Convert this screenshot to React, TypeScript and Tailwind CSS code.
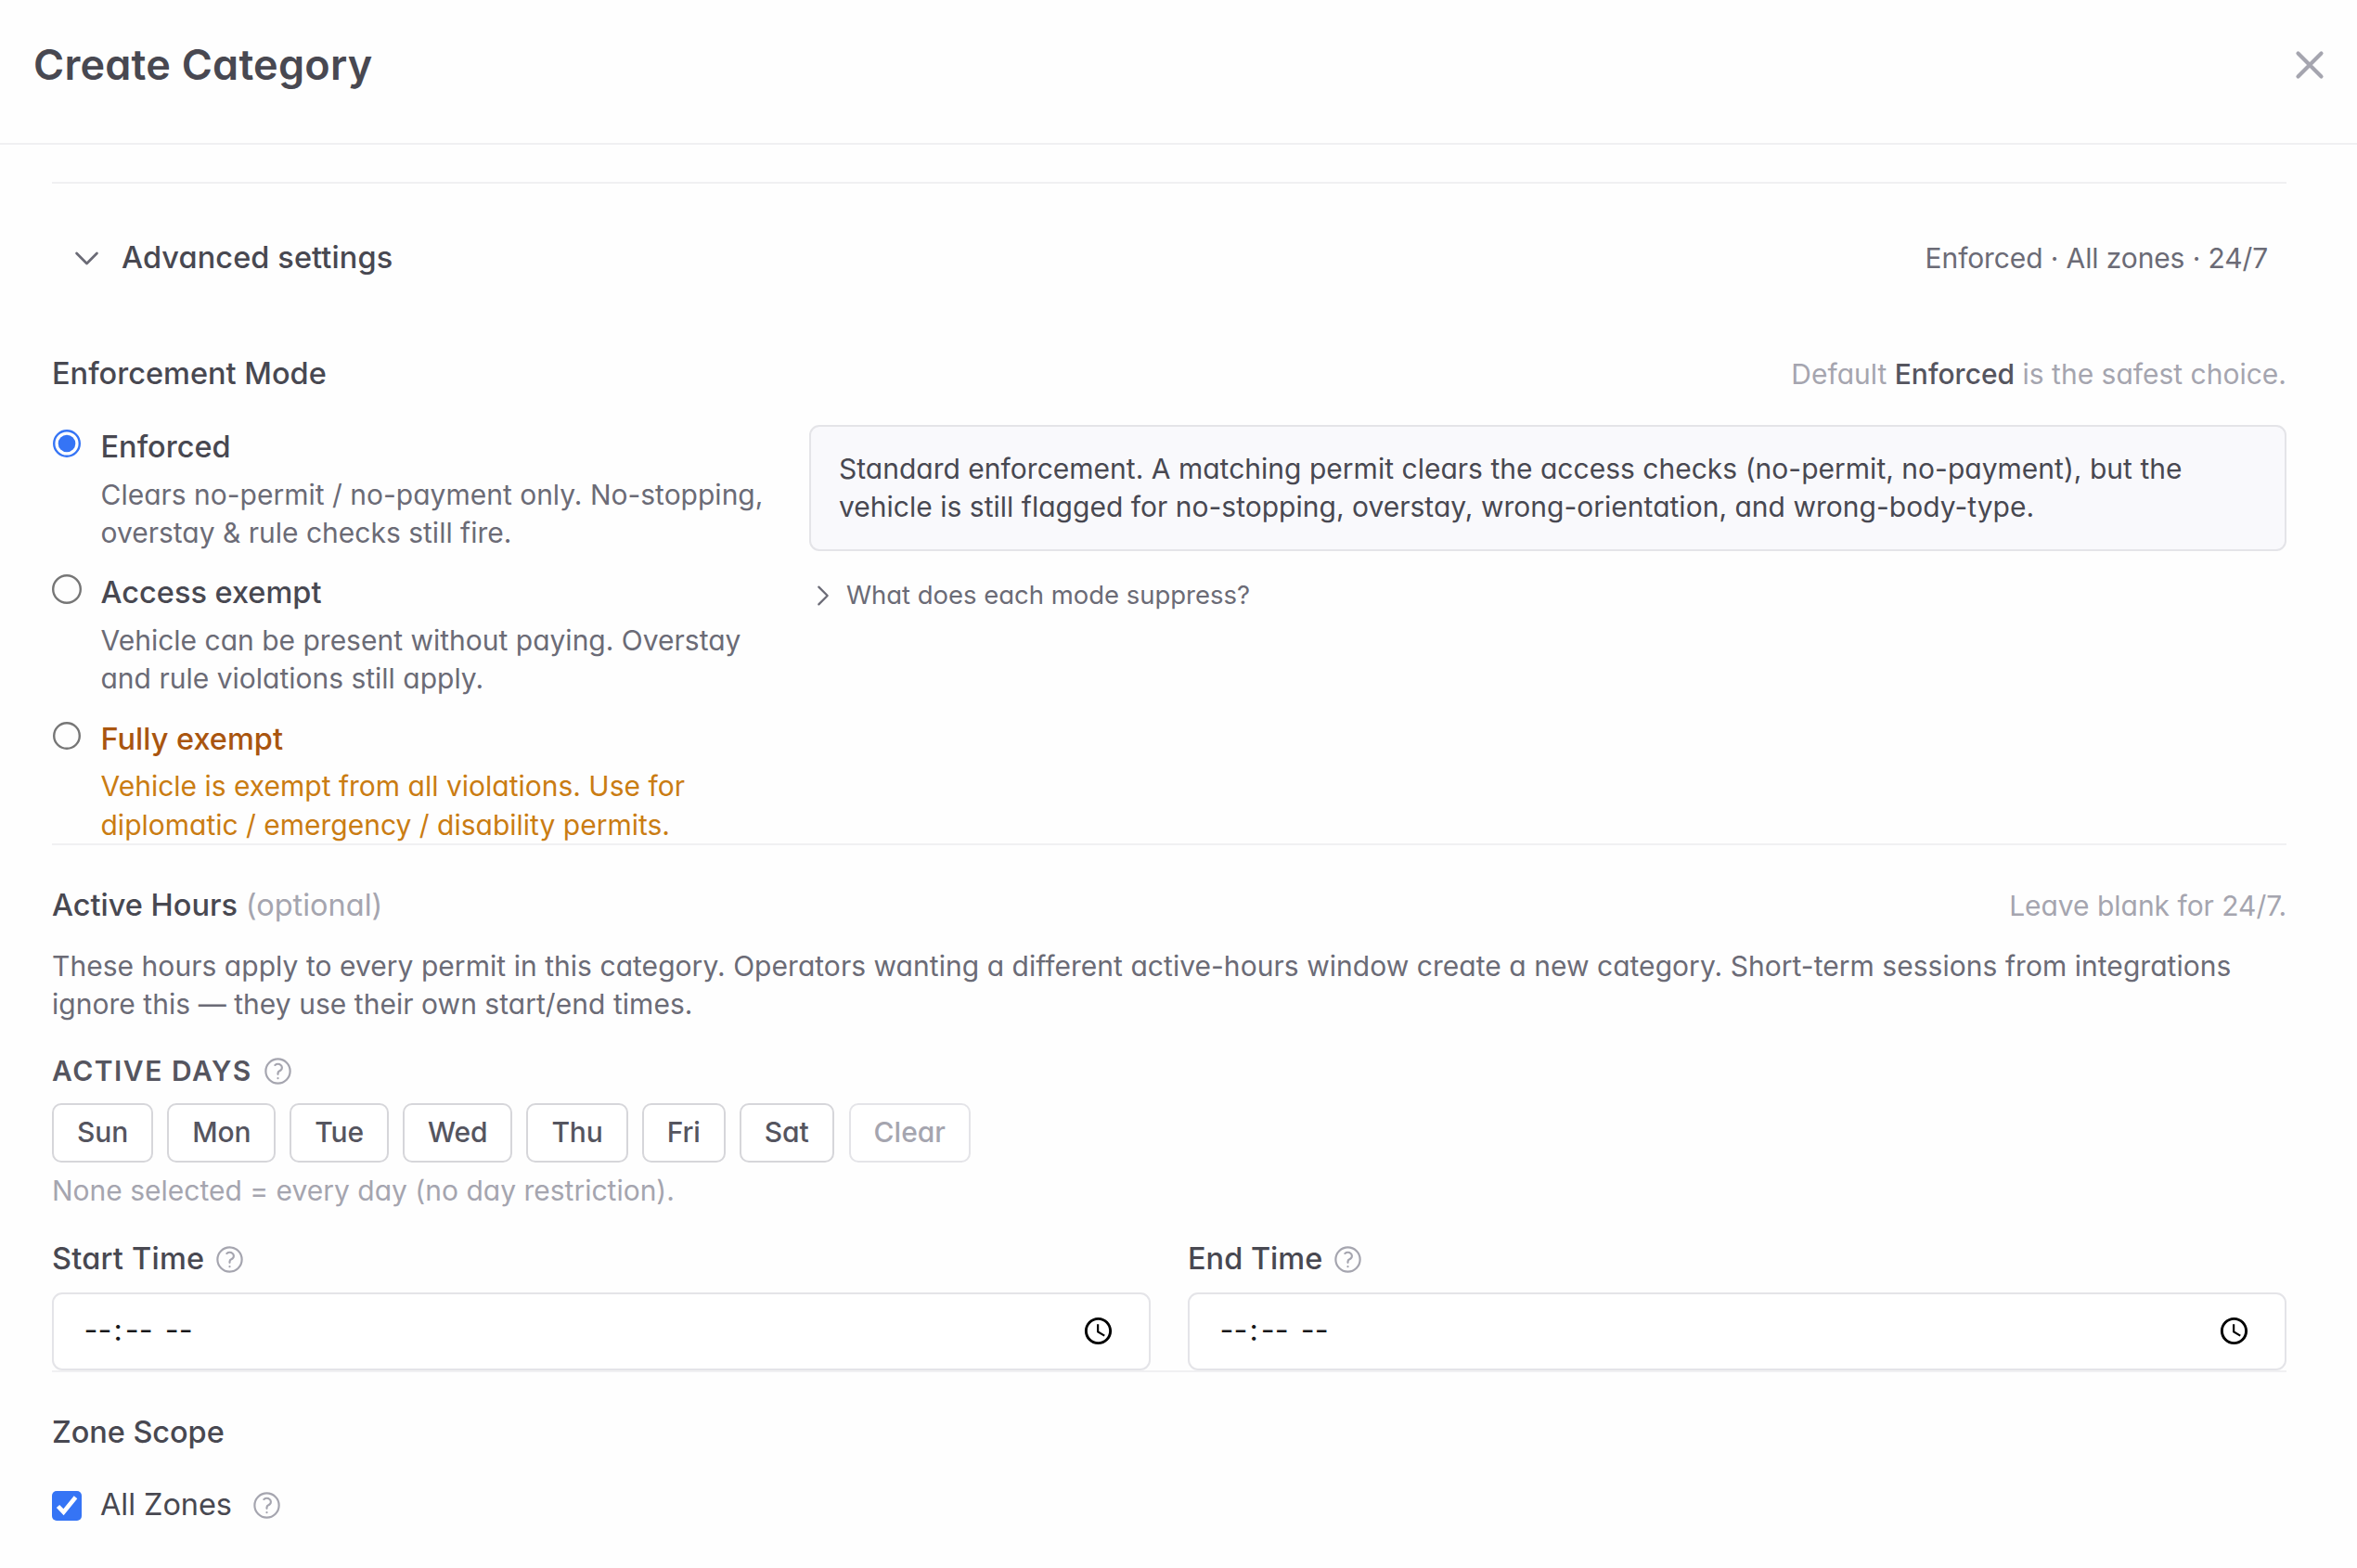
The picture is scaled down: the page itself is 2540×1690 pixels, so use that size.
import { HiOutlineChevronDown, HiOutlineChevronRight, HiOutlineQuestionMarkCircle, HiOutlineXMark } from "react-icons/hi2";
import { MdAccessTime } from "react-icons/md";

const modes = [
  {
    title: "Enforced",
    lines: ["Clears no-permit / no-payment only. No-stopping,", "overstay & rule checks still fire."],
    checked: true,
    warning: false,
    radius: 13.8,
  },
  {
    title: "Access exempt",
    lines: ["Vehicle can be present without paying. Overstay", "and rule violations still apply."],
    checked: false,
    warning: false,
    radius: 14.8,
  },
  {
    title: "Fully exempt",
    lines: ["Vehicle is exempt from all violations. Use for", "diplomatic / emergency / disability permits."],
    checked: false,
    warning: true,
    radius: 13.8,
  },
];

const days = ["Sun", "Mon", "Tue", "Wed", "Thu", "Fri", "Sat"];

function Help() {
  return <HiOutlineQuestionMarkCircle className="size-[35px] shrink-0 text-[#a5a5af]" />;
}

function Radio({ checked, radius }: { checked: boolean; radius: number }) {
  return (
    <svg viewBox="0 0 32 32" className="mt-1 size-8 shrink-0" fill="none">
      <circle cx="16" cy="16" r={radius} stroke={checked ? "#3574f5" : "#767676"} strokeWidth="2.4" />
      {checked && <circle cx="16" cy="16" r="9.3" fill="#3574f5" />}
    </svg>
  );
}

function TimeField({ label, className }: { label: string; className?: string }) {
  return (
    <div>
      <div className="flex h-[49px] items-center gap-2.5">
        <label className={`text-[32.5px] font-medium ${className ?? ""}`}>{label}</label>
        <Help />
      </div>
      <div className="mt-[11px] flex h-[84px] items-center justify-between rounded-[11px] border-2 border-[#e4e4e8] bg-white pr-[37px] pl-[32.5px] text-[32.5px] text-[#18181b]">
        <div className="flex">
          <span>--</span>
          <span className="mx-[2px]">:</span>
          <span className="mx-px">--</span>
          <span className="ml-3">--</span>
        </div>
        <MdAccessTime className="size-[35px] text-black" />
      </div>
    </div>
  );
}

export default function App() {
  return (
    <div className="h-[1690px] w-[2540px] overflow-hidden bg-[#fefefe] font-['Inter',sans-serif] text-[#484851] [font-feature-settings:'cv11']">
      <header className="flex h-[156px] items-start justify-between border-b-2 border-[#f0f0f2] pt-[42px] pr-[26px] pl-9">
        <h1 className="text-[45px] leading-[56px] font-semibold tracking-[0.005em]">Create Category</h1>
        <button className="mt-[3px]">
          <HiOutlineXMark className="size-[50px] text-[#a5a5af]" strokeWidth={2} />
        </button>
      </header>

      <main className="mt-10 ml-14 w-[2408px] border-t-2 border-[#f0f0f2]">
        <div className="mt-[50px] flex h-[60px] items-center justify-between px-5">
          <div className="flex items-center gap-5">
            <HiOutlineChevronDown className="size-[35px] text-[#6b6b76]" strokeWidth={1.9} />
            <span className="text-[32.5px] font-medium tracking-[0.003em]">Advanced settings</span>
          </div>
          <span className="text-[30px] tracking-[-0.004em] text-[#6b6b76]">Enforced · All zones · 24/7</span>
        </div>

        <section>
          <div className="mt-[70px] flex h-[49px] items-baseline justify-between">
            <h2 className="text-[32.5px] leading-[49px] font-medium">Enforcement Mode</h2>
            <p className="text-[30px] text-[#a5a5af]">
              Default <strong className="font-medium text-[#55555f]">Enforced</strong> is the safest choice.
            </p>
          </div>

          <div className="mt-[31px] -mb-px grid grid-cols-[776px_1592px] gap-10">
            <div className="flex flex-col gap-5">
              {modes.map((mode) => (
                <label key={mode.title} className="flex gap-[20.5px]">
                  <Radio checked={mode.checked} radius={mode.radius} />
                  <span>
                    <span className={`block text-[32.5px] leading-[48.75px] font-medium ${mode.warning ? "text-[#a9550f]" : ""}`}>
                      {mode.title}
                    </span>
                    <span className={`mt-1.5 block text-[30px] leading-[41.25px] whitespace-nowrap ${mode.warning ? "text-[#ca7c12]" : "text-[#6b6b76]"}`}>
                      {mode.lines[0]}
                      <br />
                      {mode.lines[1]}
                    </span>
                  </span>
                </label>
              ))}
            </div>

            <div>
              <div className="h-[136px] rounded-[11px] border-2 border-[#e4e4e8] bg-[#f9f9fc] px-[30px] py-[25px] text-[30px] leading-[41.25px] tracking-[0.0005em]">
                Standard enforcement. A matching permit clears the access checks (no-permit, no-payment), but the
                <br />
                vehicle is still flagged for no-stopping, overstay, wrong-orientation, and wrong-body-type.
              </div>
              <button className="mt-[27px] flex h-[41px] items-center gap-2.5 text-[27.5px] tracking-[-0.001em] text-[#6b6b76]">
                <HiOutlineChevronRight className="size-[30px]" strokeWidth={1.8} />
                What does each mode suppress?
              </button>
            </div>
          </div>
        </section>

        <section className="border-t-2 border-[#f0f0f2]">
          <div className="mt-10 flex h-[49px] items-baseline justify-between">
            <h2 className="text-[32.5px] leading-[49px] font-medium">
              Active Hours <span className="font-normal text-[#a5a5af]">(optional)</span>
            </h2>
            <p className="text-[30px] tracking-[-0.001em] text-[#a5a5af]">Leave blank for 24/7.</p>
          </div>
          <p className="mt-[21px] text-[30px] leading-[41.25px] tracking-[0.0013em] whitespace-nowrap text-[#6b6b76]">
            These hours apply to every permit in this category. Operators wanting a different active-hours window create a new category. Short-term sessions from integrations
            <br />
            ignore this — they use their own start/end times.
          </p>

          <div className="mt-[28.5px] flex h-[45px] items-center gap-2.5">
            <span className="text-[30px] font-semibold tracking-[0.05em] text-[#55555f]">ACTIVE DAYS</span>
            <Help />
          </div>
          <div className="mt-3 flex h-16 gap-[15px] text-[30px] font-medium tracking-[-0.004em] text-[#55555f]">
            {days.map((day) => (
              <button key={day} className="rounded-[10px] border-2 border-[#d6d6da] bg-white px-[25px]">
                {day}
              </button>
            ))}
            <button className="ml-px rounded-[10px] border-2 border-[#e4e4e8] bg-white px-[25px] tracking-normal text-[#a5a5af]">Clear</button>
          </div>
          <p className="mt-[10px] text-[30px] leading-[41px] text-[#a5a5af]">None selected = every day (no day restriction).</p>

          <div className="mt-[29px] grid grid-cols-2 gap-10">
            <TimeField label="Start Time" className="tracking-[0.007em]" />
            <TimeField label="End Time" />
          </div>
        </section>

        <section className="border-t-2 border-[#f0f0f2]">
          <h2 className="mt-10 text-[32.5px] leading-[49px] font-medium tracking-[-0.002em]">Zone Scope</h2>
          <label className="mt-[30px] flex h-[50px] items-center gap-5 text-[32.5px]">
            <span className="flex size-8 items-center justify-center rounded-[5px] bg-[#3574f5]">
              <svg viewBox="0 0 32 32" className="size-8" fill="none" stroke="#fff" strokeWidth="4.6">
                <path d="M6.5 16.5l6 6.2L25.5 6.8" />
              </svg>
            </span>
            <span className="tracking-[-0.002em]">All Zones</span>
            <Help />
          </label>
        </section>
      </main>
    </div>
  );
}
